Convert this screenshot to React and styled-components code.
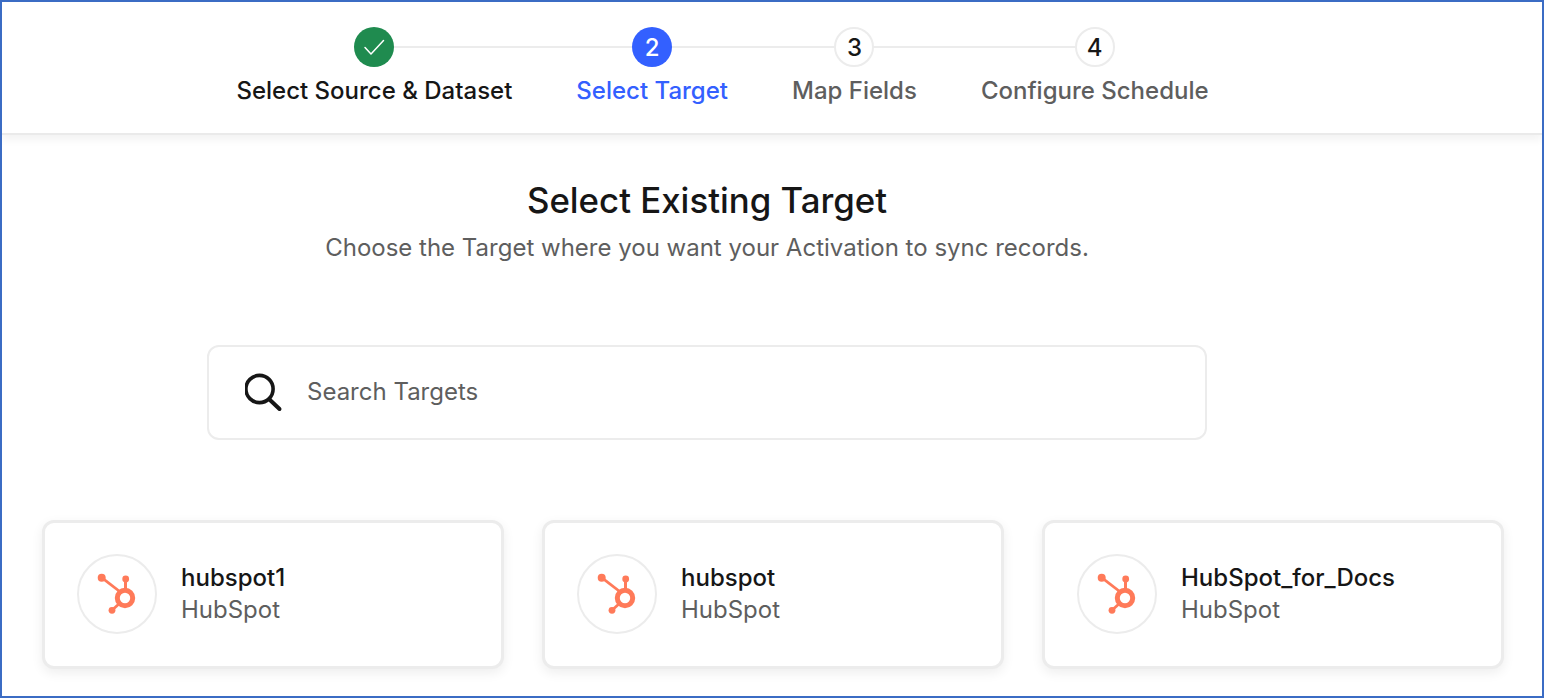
import styled, { createGlobalStyle } from "styled-components";

const GlobalStyle = createGlobalStyle`
  html, body {
    margin: 0;
    padding: 0;
    background: #fff;
  }
  body {
    font-family: "Inter", "Liberation Sans", sans-serif;
    color: #161616;
  }
`;

const Frame = styled.div`
  box-sizing: border-box;
  width: 1544px;
  height: 698px;
  border: 2px solid #3b6cc4;
  overflow: hidden;
  background: #fff;
`;

const Header = styled.header`
  box-sizing: border-box;
  height: 133px;
  padding: 25px 334px 0 235px;
  display: flex;
  justify-content: center;
  gap: 64px;
  border-bottom: 2px solid #eaeaea;
  box-shadow: 0 5px 8px rgba(0, 0, 0, 0.05);
`;

const Step = styled.div`
  position: relative;
  display: flex;
  flex-direction: column;
  align-items: center;
  gap: 9px;
  &::after {
    content: "";
    display: ${(props) => (props.$line ? "block" : "none")};
    position: absolute;
    top: 19px;
    left: 50%;
    width: ${(props) => props.$line}px;
    height: 2px;
    background: #ececec;
  }
`;

const Bubble = styled.div`
  position: relative;
  z-index: 1;
  box-sizing: border-box;
  width: 40px;
  height: 40px;
  border-radius: 50%;
  display: flex;
  align-items: center;
  justify-content: center;
  font-size: 24px;
  font-weight: 500;
  color: ${(props) => (props.$state === "todo" ? "#161616" : "#fff")};
  background: ${(props) =>
    props.$state === "done" ? "#1f8b4f" : props.$state === "active" ? "#3360ff" : "#fff"};
  border: ${(props) => (props.$state === "todo" ? "2px solid #ececec" : "none")};
`;

const StepLabel = styled.div`
  font-size: 24px;
  line-height: 30px;
  white-space: nowrap;
  font-weight: 500;
  color: ${(props) =>
    props.$state === "done" ? "#161616" : props.$state === "active" ? "#3360ff" : "#5e5e5e"};
`;

const Main = styled.main`
  display: flex;
  flex-direction: column;
  align-items: center;
  padding: 0 40px;
`;

const Intro = styled.div`
  width: 1000px;
  margin-top: 41px;
  margin-right: 130px;
  text-align: center;
`;

const Title = styled.h1`
  margin: 0;
  font-size: 34.8px;
  line-height: 48px;
  font-weight: 500;
  color: #161616;
`;

const Subtitle = styled.p`
  margin: 8px 0 0;
  font-size: 24px;
  line-height: 32px;
  color: #5e5e5e;
`;

const SearchBox = styled.div`
  box-sizing: border-box;
  width: 1000px;
  height: 95px;
  margin-top: 81px;
  margin-right: 130px;
  padding: 0 36px;
  display: flex;
  align-items: center;
  gap: 22px;
  border: 2px solid #ececec;
  border-radius: 12px;
`;

const SearchText = styled.span`
  font-size: 24px;
  padding-bottom: 2px;
  color: #5e5e5e;
`;

const CardRow = styled.div`
  display: flex;
  gap: 38px;
  margin-top: 80px;
  align-self: flex-start;
`;

const Card = styled.div`
  box-sizing: border-box;
  width: 462px;
  height: 149px;
  padding: 0 32px 1px;
  display: flex;
  align-items: center;
  gap: 24px;
  border: 3px solid #ececec;
  border-radius: 12px;
  background: #fff;
  box-shadow: 0 4px 12px rgba(0, 0, 0, 0.07);
`;

const LogoCircle = styled.div`
  box-sizing: border-box;
  width: 80px;
  height: 80px;
  flex: none;
  border: 2px solid #ececec;
  border-radius: 50%;
  display: flex;
  align-items: center;
  justify-content: center;
`;

const CardInfo = styled.div`
  display: flex;
  flex-direction: column;
  gap: 1px;
  padding-bottom: 2px;
`;

const CardName = styled.div`
  font-size: 24px;
  line-height: 31px;
  font-weight: 500;
  color: #161616;
`;

const CardType = styled.div`
  font-size: 24px;
  line-height: 31px;
  color: #5e5e5e;
`;

const CheckIcon = () => (
  <svg width="24" height="24" viewBox="0 0 24 24" fill="none">
    <path d="M3 12.5 L9 19 L21.5 5.5" stroke="#fff" strokeWidth="1.5" strokeLinecap="round" strokeLinejoin="round" />
  </svg>
);

const SearchIcon = () => (
  <svg width="40" height="40" viewBox="0 0 40 40" fill="none">
    <circle cx="14.5" cy="16" r="13.6" stroke="#161616" strokeWidth="3.6" />
    <path d="M25 27 L34.5 36" stroke="#161616" strokeWidth="4" strokeLinecap="round" />
  </svg>
);

const HubSpotIcon = () => (
  <svg width="44" height="44" viewBox="0 0 44 44" fill="none">
    <g fill="#ff7a59" stroke="none">
      <circle cx="30.7" cy="7" r="3.4" />
      <circle cx="6.7" cy="5.7" r="4" />
      <circle cx="17" cy="38.3" r="3.4" />
    </g>
    <g stroke="#ff7a59" fill="none">
      <path d="M30.5 8 V20" strokeWidth="3" />
      <path d="M6.7 5.7 L26 20.5" strokeWidth="2.8" />
      <path d="M17 38.3 L25.5 30.5" strokeWidth="2.8" />
      <circle cx="30" cy="26" r="7.7" strokeWidth="5" />
    </g>
  </svg>
);

const steps = [
  { label: "Select Source & Dataset", state: "done", line: 278 },
  { label: "Select Target", state: "active", number: 2, line: 202 },
  { label: "Map Fields", state: "todo", number: 3, line: 240 },
  { label: "Configure Schedule", state: "todo", number: 4 },
];

const targets = [
  { name: "hubspot1", type: "HubSpot" },
  { name: "hubspot", type: "HubSpot" },
  { name: "HubSpot_for_Docs", type: "HubSpot" },
];

const App = () => {
  return (
    <>
      <GlobalStyle />
      <Frame>
        <Header>
          {steps.map((step) => (
            <Step key={step.label} $line={step.line}>
              <Bubble $state={step.state}>
                {step.state === "done" ? <CheckIcon /> : step.number}
              </Bubble>
              <StepLabel $state={step.state}>{step.label}</StepLabel>
            </Step>
          ))}
        </Header>
        <Main>
          <Intro>
            <Title>Select Existing Target</Title>
            <Subtitle>Choose the Target where you want your Activation to sync records.</Subtitle>
          </Intro>
          <SearchBox>
            <SearchIcon />
            <SearchText>Search Targets</SearchText>
          </SearchBox>
          <CardRow>
            {targets.map((target) => (
              <Card key={target.name}>
                <LogoCircle>
                  <HubSpotIcon />
                </LogoCircle>
                <CardInfo>
                  <CardName>{target.name}</CardName>
                  <CardType>{target.type}</CardType>
                </CardInfo>
              </Card>
            ))}
          </CardRow>
        </Main>
      </Frame>
    </>
  );
};

export default App;
